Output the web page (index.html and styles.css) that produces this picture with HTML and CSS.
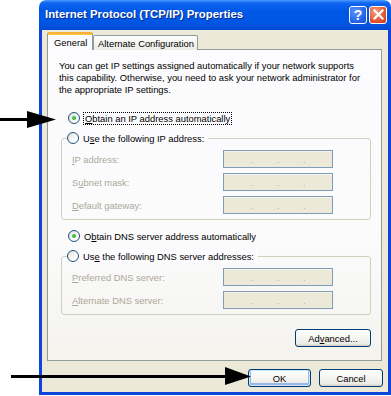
FILE: index.html
```html
<!DOCTYPE html>
<html>
<head>
<meta charset="utf-8">
<link rel="stylesheet" href="styles.css">
</head>
<body>
<div class="stage">
  <div class="window">
    <div class="titlebar">
      <span class="title">Internet Protocol (TCP/IP) Properties</span>
      <div class="tb-btns">
        <span class="tb-btn help">?</span>
        <span class="tb-btn close"><svg width="11" height="11" viewBox="0 0 11 11"><path d="M1.5 1.5 L9.5 9.5 M9.5 1.5 L1.5 9.5" stroke="#fff" stroke-width="2.2" stroke-linecap="square"/></svg></span>
      </div>
    </div>
    <div class="client">
      <div class="tabs">
        <div class="tab active">General</div>
        <div class="tab">Alternate Configuration</div>
      </div>
      <div class="panel">
        <p class="intro">You can get IP settings assigned automatically if your network supports<br>this capability. Otherwise, you need to ask your network administrator for<br>the appropriate IP settings.</p>
        <div class="radio-row first">
          <span class="radio checked"></span>
          <span class="focus"><u>O</u>btain an IP address automatically</span>
        </div>
        <div class="group">
          <div class="legend"><span class="radio"></span><span>U<u>s</u>e the following IP address:</span></div>
          <div class="fields">
            <span class="lbl"><u>I</u>P address:</span><span class="ip"><i>.</i><i>.</i><i>.</i></span>
            <span class="lbl">S<u>u</u>bnet mask:</span><span class="ip"><i>.</i><i>.</i><i>.</i></span>
            <span class="lbl"><u>D</u>efault gateway:</span><span class="ip"><i>.</i><i>.</i><i>.</i></span>
          </div>
        </div>
        <div class="radio-row dns">
          <span class="radio checked"></span>
          <span>O<u>b</u>tain DNS server address automatically</span>
        </div>
        <div class="group">
          <div class="legend"><span class="radio"></span><span>Us<u>e</u> the following DNS server addresses:</span></div>
          <div class="fields">
            <span class="lbl"><u>P</u>referred DNS server:</span><span class="ip"><i>.</i><i>.</i><i>.</i></span>
            <span class="lbl"><u>A</u>lternate DNS server:</span><span class="ip"><i>.</i><i>.</i><i>.</i></span>
          </div>
        </div>
        <div class="adv-row"><span class="btn adv">Ad<u>v</u>anced...</span></div>
      </div>
      <div class="footer">
        <span class="btn ok">OK</span>
        <span class="btn">Cancel</span>
      </div>
    </div>
  </div>
  <svg class="arrow arrow-top" width="60" height="24" viewBox="0 0 60 24">
    <rect x="0" y="7" width="30" height="3" fill="#000"/>
    <polygon points="27,0 56,8.5 27,17" fill="#000"/>
  </svg>
  <svg class="arrow arrow-bottom" width="245" height="20" viewBox="0 0 245 20">
    <rect x="0" y="8" width="220" height="3" fill="#000"/>
    <polygon points="214,0 240,9.5 214,18" fill="#000"/>
  </svg>
</div>
</body>
</html>
```

FILE: styles.css
```css
* { box-sizing: border-box; }
html, body { margin: 0; padding: 0; background: #fff; }
body {
  font-family: "Liberation Sans", Arial, sans-serif;
  font-size: 9.4px;
  color: #000;
}
.stage {
  position: relative;
  width: 391px;
  height: 396px;
  overflow: hidden;
}
.window {
  margin-left: 39px;
  width: 352px;
  height: 395px;
  display: flex;
  flex-direction: column;
}
.titlebar {
  height: 30px;
  flex: none;
  border-radius: 7px 7px 0 0;
  background: linear-gradient(to bottom, #4a9dff 0, #0f66f2 10%, #0058e6 35%, #0056e4 75%, #0049d4 100%);
  display: flex;
  align-items: center;
  padding: 0 4px 2px 6px;
}
.title {
  flex: 1;
  color: #fff;
  font-weight: bold;
  font-size: 11.4px;
  text-shadow: 1px 1px 0 #0a2a8a;
  white-space: nowrap;
}
.tb-btns { display: flex; gap: 2px; margin-top: 1px; }
.tb-btn {
  width: 18px;
  height: 18px;
  border: 1px solid #fff;
  border-radius: 3px;
  display: flex;
  align-items: center;
  justify-content: center;
  color: #fff;
  font-weight: bold;
  font-size: 14px;
}
.help { background: radial-gradient(circle at 35% 30%, #5e97ff, #1f5ee8 70%, #1c4fd0); }
.close { background: radial-gradient(circle at 35% 30%, #f4a387, #e4552f 60%, #c7391b); }
.client {
  flex: 1;
  background: #ece9d8;
  border-left: 3px solid #0b45d9;
  border-right: 3px solid #0b45d9;
  border-bottom: 3px solid #0b45d9;
  padding: 2px 5px 0 5px;
  display: flex;
  flex-direction: column;
}
.tabs {
  display: flex;
  align-items: flex-end;
  height: 18px;
  position: relative;
  z-index: 1;
  margin-bottom: -1px;
}
.tab {
  height: 15px;
  padding: 0 3px 0 4px;
  border: 1px solid #919b9c;
  border-bottom: none;
  border-radius: 2px 2px 0 0;
  background: linear-gradient(#fff, #f3f3ef 60%, #ecebe6);
  display: flex;
  align-items: center;
  white-space: nowrap;
}
.tab.active {
  height: 18px;
  width: 46px;
  padding: 0 0 0 6px;
  background: #fcfcfe;
  border-top: 2px solid #f8b23c;
  box-shadow: inset 0 1px 0 #ffc83c;
}
.panel {
  width: 335px;
  height: 312px;
  border: 1px solid #919b9c;
  background: linear-gradient(#fcfcfe 0, #fbfbfc 60%, #f4f3ee 100%);
  padding: 10px 10px 0 11px;
  display: flex;
  flex-direction: column;
}
.intro {
  margin: 0;
  line-height: 12px;
  white-space: nowrap;
}
.radio-row {
  display: flex;
  align-items: center;
  height: 16px;
  margin-left: 9px;
  gap: 4px;
  white-space: nowrap;
}
.radio-row.first { margin-top: 14px; }
.radio-row.dns { margin-top: 8px; }
.radio {
  width: 12px;
  height: 12px;
  flex: none;
  border-radius: 50%;
  border: 1px solid #1c5180;
  background: linear-gradient(135deg, #dcdcd6, #fff 70%);
  position: relative;
}
.radio.checked::after {
  content: "";
  position: absolute;
  left: 3px;
  top: 3px;
  width: 4px;
  height: 4px;
  border-radius: 50%;
  background: radial-gradient(circle at 40% 40%, #55d34f, #1f9c1a);
}
.focus {
  outline: 1px dotted #000;
  outline-offset: 0;
  padding: 0 1px;
}
.group {
  margin: 5px 0 0 2px;
  width: 310px;
  position: relative;
  padding-top: 7px;
}
.group .legend {
  position: absolute;
  left: 6px;
  top: 0;
  height: 14px;
  display: flex;
  align-items: center;
  gap: 4px;
  background: #fcfcfe;
  padding-right: 4px;
  white-space: nowrap;
}
.fields {
  border: 1px solid #d0d0bf;
  border-radius: 3px;
  padding: 11px 37px 5px 10px;
  display: grid;
  grid-template-columns: 1fr 110px;
  row-gap: 5px;
  align-items: center;
}
.lbl { color: #aca899; white-space: nowrap; }
.ip {
  height: 18px;
  border: 1px solid #7f9db9;
  background: #ece9d8;
  box-shadow: inset 0 1px 0 #f5f3ea;
  display: flex;
  padding: 0 0 0 27px;
  gap: 23px;
  align-items: flex-end;
}
.ip i {
  font-style: normal;
  color: #aca899;
  font-size: 9px;
  line-height: 13px;
  width: 3px;
}
.adv-row {
  display: flex;
  justify-content: flex-end;
  margin-top: 14px;
}
.btn {
  height: 18px;
  border: 1px solid #003c74;
  border-radius: 3px;
  background: linear-gradient(#ffffff 0, #f7f7f4 40%, #ecebe6 85%, #d6d0c5 100%);
  display: flex;
  align-items: center;
  justify-content: center;
  width: 64px;
  white-space: nowrap;
}
.adv { width: 76px; }
.footer {
  display: flex;
  justify-content: flex-end;
  gap: 8px;
  margin-top: 8px;
}
.ok {
  width: 63px;
  box-shadow: inset 0 0 0 1px #cee7ff, inset 0 -1px 0 2px #98b8ea;
}
.arrow { position: absolute; }
.arrow-top { left: 0; top: 111px; }
.arrow-bottom { left: 11px; top: 367px; }
```
